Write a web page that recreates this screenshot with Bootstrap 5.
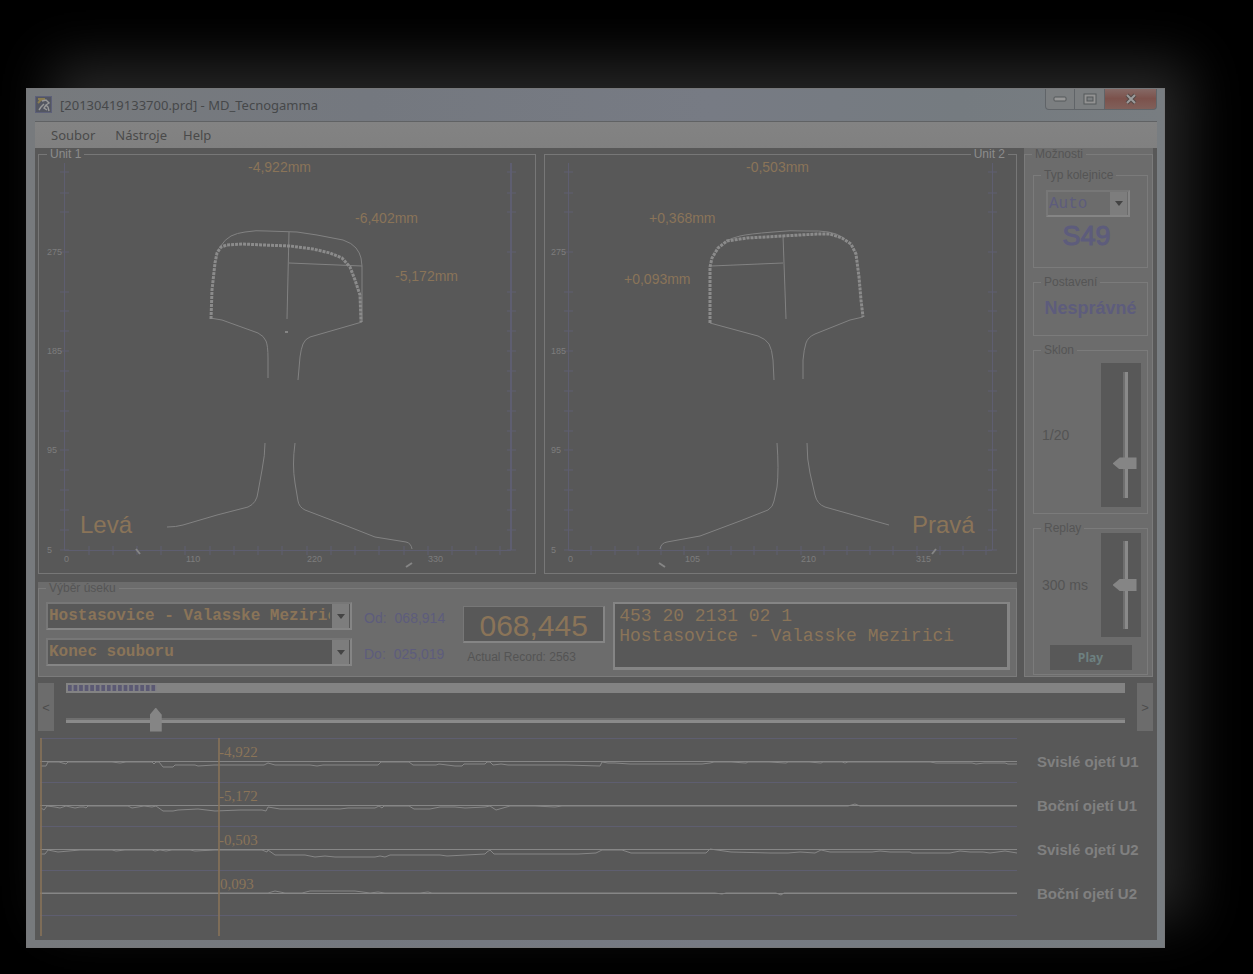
<!DOCTYPE html>
<html lang="cs">
<head>
<meta charset="utf-8">
<meta name="viewport" content="width=device-width, initial-scale=1">
<title>MD_Tecnogamma</title>
<link href="https://cdn.jsdelivr.net/npm/bootstrap@5.3.0/dist/css/bootstrap.min.css" rel="stylesheet">
<style>
:root{--face:#6c6c6c;--dark:#585858;--light:#858585;--line:#7b7b7b;--ink:#545454;--amber:#8a7458;--blue:#5d5c7c}
body{background:#000;padding:88px 88px 26px 26px;font:12px/13px "Liberation Sans",Arial,sans-serif;color:var(--ink)}
.app-window{background:linear-gradient(90deg,#777a7d,#74787f 30%,#777b84 60%,#757b80 82%,#787d81);padding:0 8px 8px 9px;box-shadow:25px -27px 50px #252525;outline:1px solid #77787a;outline-offset:-1px}
.title-bar{height:33px;font:13px/16px "Noto Sans",sans-serif;color:#46484a}
.win-btn{border:1px solid #606468;border-top:0;height:22px;width:30px;background:#7b7e80;padding:0}
.win-btn+.win-btn{border-left:0}
.win-btn.close-btn{width:52px;background:linear-gradient(#866c68,#7c524c 50%,#80605a);border-radius:0 0 4px 0}
.win-btn.min-btn{border-radius:0 0 0 4px}
.menu-bar{height:27px;background:linear-gradient(#838383,#808080);border-top:1px solid #606264;font:13px/16px "Noto Sans",sans-serif}
.menu-bar a{color:#4a4a4a;text-decoration:none}
.client{background:var(--dark);padding:0 4px 0 3px}
.with-side{display:grid;grid-template-columns:minmax(0,1fr) 129px;column-gap:7px}
.units{display:grid;grid-template-columns:498fr 473fr;column-gap:8px}
.gbox{border:1px solid var(--line);padding:0}
.gbox>legend{float:none;width:auto;margin:0 0 0 7px;padding:0 3px;font-size:12px;line-height:13px;height:13px;color:#555}
.unit-box{border-color:#777}
.unit-box>legend{color:#8c8c8c;margin-left:8px}
.unit-box>legend.at-right{margin:0 8px 0 auto}
svg{display:block;overflow:visible}
.panel{background:var(--face)}
.section-row{padding:7px 6px 6px 7px}
.section-combos{width:306px}
.value-md{font-size:14px;line-height:16px}
.blue{color:var(--blue)}
.combo{position:relative;border:2px solid var(--light);border-top-color:#777;border-left-color:#777;height:28px;background:var(--dark)}
.combo select{appearance:none;width:100%;height:100%;border:0;border-radius:0;background:transparent;color:var(--amber);font:bold 16px/20px "Liberation Mono",monospace;padding:0 20px 0 1px;display:block}
.combo .drop{position:absolute;right:1px;top:0;bottom:0;width:17px;background:#7d7d7d;pointer-events:none;display:flex;align-items:center;justify-content:center}
.combo.plain{background:var(--face);height:27px;width:84px;margin:8px 0 0 12px}
.combo.plain select{color:var(--blue);font-weight:normal}
.counter{width:142px;height:37px;border:2px solid var(--light);border-top:1px solid #777;border-left:1px solid #777;background:var(--dark);color:var(--amber);font-size:30px;line-height:38px;text-align:center}
.counter-col{margin-left:18px}
.record-text{height:68px;resize:none;background:var(--dark);border:3px solid var(--light);border-top-width:2px;border-left-width:2px;color:var(--amber);font:18px/20px "Liberation Mono",monospace;padding:2px 4px;overflow:hidden;display:block}
.slider{appearance:none;height:24px;background:transparent;margin:0;display:block;flex:none}
.slider::-webkit-slider-runnable-track{height:5px;background:linear-gradient(#6f6f6f 40%,#8a8a8a 40%)}
.slider::-webkit-slider-thumb{appearance:none;width:12px;height:24px;margin-top:-10px;background:#858585;clip-path:polygon(50% 0,100% 30%,100% 100%,0 100%,0 30%)}
.position-slider{margin-top:15px}
.slot-row{padding:6px 6px 0 8px}
.slot{width:40px;padding-left:8px;background:var(--dark);display:flex;align-items:center;justify-content:center;flex:none}
.slot .slider{transform:rotate(-90deg)}
.slot-tall{height:144px}.slot-tall .slider{width:126px}
.slot-short{height:104px}.slot-short .slider{width:88px}
.side-head{min-height:99px}.side-state{min-height:60px}.side-tilt{min-height:170px}.side-replay{min-height:153px}
.side-replay .slot-row{margin-top:-8px}
.rail-type{font-size:27px;line-height:30px;-webkit-text-stroke:1px var(--blue)}
.rail-state{font-size:18px;line-height:22px;font-weight:bold}
.play-btn{display:block;width:82px;height:25px;border:0;background:var(--dark);color:#6d8080;font:bold 12px/16px "Open Sans",sans-serif}
.step-row{padding-top:6px}
.step-btn{width:16px;height:48px;border:0;background:var(--face);color:#4c4c4c;font-size:13px;padding:0}
.progress.record-progress{height:10px;border-radius:0;background:#838383;padding:2px}
.record-progress .progress-bar{background:linear-gradient(90deg,#5b5973 65%,#808086 65%) 0 0/6.25% 100%}
.trace-names{font:bold 15px/16px "Liberation Sans",sans-serif;color:#808080;padding:4px 0 0 13px}
.trace-names div{height:44px;display:flex;align-items:center}
.curve{fill:none;stroke:#828282;stroke-width:1}
.traces .curve{stroke:#868686}
.scan{fill:none;stroke:#8b8b8b;stroke-width:3;stroke-dasharray:3 1}
.axis{fill:none;stroke:#5e5e70;stroke-width:1}
.axis-strong{stroke-width:2}
.axis-text{font-size:9px;fill:#7d7d7d}
.mm{font-size:14px;fill:var(--amber)}
.side-name{font-size:24px;fill:var(--amber)}
.trace-val{font:15px "Liberation Serif",serif;fill:var(--amber)}
</style>
</head>
<body>
<div class="app-window">
  <header class="title-bar d-flex justify-content-between">
    <div class="d-flex align-items-center gap-1">
      <svg class="me-1" width="17" height="17" viewBox="0 0 17 17" aria-hidden="true"><rect width="17" height="17" fill="#535661"/><rect x=".5" y=".5" width="16" height="16" fill="none" stroke="#5d6079"/><path d="M3 3h7M4 5l4-2M3 7l2-2" stroke="#8a7c50" stroke-width="2" fill="none"/><path d="M7 5l4-1 3 3-3 2 2 2 1 4M9 8l-3 3-2 3M11 9l-2 3 3 2" stroke="#989898" stroke-width="1.4" fill="none"/></svg>
      <span>[20130419133700.prd] - MD_Tecnogamma</span>
    </div>
    <div class="d-flex align-items-start">
      <button class="win-btn min-btn" aria-label="Minimalizovat"><svg class="mx-auto" width="14" height="8"><rect x="1" y="2" width="12" height="4" rx="1" fill="#969696" stroke="#55585a"/></svg></button>
      <button class="win-btn" aria-label="Maximalizovat"><svg class="mx-auto" width="14" height="12"><rect x="1" y="1" width="12" height="10" fill="#929292" stroke="#55585a"/><rect x="4" y="4" width="6" height="4" fill="#7b7e80" stroke="#55585a"/></svg></button>
      <button class="win-btn close-btn" aria-label="Zavřít"><svg class="mx-auto" width="12" height="10"><path d="M2 1l8 8M10 1l-8 8" stroke="#544a48" stroke-width="4"/><path d="M2 1l8 8M10 1l-8 8" stroke="#9b9b9b" stroke-width="2"/></svg></button>
    </div>
  </header>
  <nav class="menu-bar d-flex align-items-center px-3 gap-3">
    <a href="#" class="me-1">Soubor</a><a href="#">Nástroje</a><a href="#">Help</a>
  </nav>
  <main class="client">
    <div class="with-side">
      <div class="d-flex flex-column gap-2">
        <div class="units">
          <fieldset class="gbox unit-box">
            <legend>Unit 1</legend>
            <svg width="100%" viewBox="39 161 496 412" role="img" aria-label="Profil levé kolejnice">
              <defs><path id="vticks" d="M-4 172h9M-4 193h9M-4 212h9M-4 252h9M-4 292h9M-4 311h9M-4 331h9M-4 351h9M-4 371h9M-4 391h9M-4 411h9M-4 431h9M-4 450h9M-4 470h9M-4 490h9M-4 510h9M-4 530h9M-4 550h9"/></defs>
              <g class="axis"><path d="M64.500 163V550.500H511"/><path class="axis-strong" d="M511 163V550"/><use href="#vticks" x="64"/><use href="#vticks" x="511"/>
              <path d="M89 546v9M113 546v9M137 546v9M161 546v9M185 546v9M210 546v9M234 546v9M258 546v9M282 546v9M307 546v9M331 546v9M355 546v9M379 546v9M404 546v9M428 546v9M452 546v9M476 546v9M500 546v9"/></g>
              <g class="axis-text"><text x="47" y="255">275</text><text x="47" y="354">185</text><text x="47" y="453">95</text><text x="47" y="553">5</text><text x="64" y="562">0</text><text x="186" y="562">110</text><text x="307" y="562">220</text><text x="428" y="562">330</text></g>
              <path class="curve" d="M220 247Q225 239 231 236T245 232Q256 230 267 231L297 232 317 235 343 240Q352 243 356 248T361 258L362 266V322L310 337Q305 339 303 344T300 357L298 380M289 232L287 319M289 263L362 266M210 318L222 320 258 333Q264 336 266 341T268 358V378M265 443Q265 455 262 470L258 492Q257 503 248 507L217 515 183 525Q176 527 167 527M295 443Q292 465 295 483L298 501Q299 507 305 510L347 526 375 537 406 542Q411 543 412 549"/>
              <path class="scan" d="M211 319L212 290 215 263 217 253 221 247 227 245 243 244 263 245 290 246 313 249 330 253 342 258 350 267 355 280 360 295 361 322"/>
              <path d="M136 549L140 554M406 567L412 563M285 332h3" stroke="#858585" stroke-width="2"/>
              <g class="mm"><text x="248" y="172">-4,922mm</text><text x="355" y="223">-6,402mm</text><text x="395" y="281">-5,172mm</text></g>
              <text class="side-name" x="80" y="533">Levá</text>
            </svg>
          </fieldset>
          <fieldset class="gbox unit-box">
            <legend class="at-right">Unit 2</legend>
            <svg width="100%" viewBox="545 161 471 412" role="img" aria-label="Profil pravé kolejnice">
              <g class="axis"><path d="M568.500 163V550.500H992"/><path d="M992.500 163V550"/><use href="#vticks" x="568"/><use href="#vticks" x="992"/>
              <path d="M591 546v9M615 546v9M638 546v9M661 546v9M684 546v9M708 546v9M731 546v9M754 546v9M777 546v9M801 546v9M824 546v9M847 546v9M870 546v9M893 546v9M917 546v9M940 546v9M963 546v9M986 546v9"/></g>
              <g class="axis-text"><text x="551" y="255">275</text><text x="551" y="354">185</text><text x="551" y="453">95</text><text x="551" y="553">5</text><text x="568" y="562">0</text><text x="685" y="562">105</text><text x="801" y="562">210</text><text x="916" y="562">315</text></g>
              <path class="curve" d="M726 241Q732 238 740 236T773 232Q790 230 807 231 832 230 842 237M711 266L783 263M783 235L786 319M710 323L758 336Q766 339 769 344T773 360L774 380M863 317L850 320 815 334Q808 337 806 343T803 360V379M777 443Q779 470 777 487L774 501Q773 507 768 510L740 521 700 536 667 542Q661 543 660 549M807 443Q807 460 810 473L815 495Q817 504 825 507L889 525"/>
              <path class="scan" d="M710 323V267L712 258 718 248 727 241 747 238 783 236 817 234 830 234 842 238 851 244 856 254 859 277 861 300 863 317"/>
              <path d="M659 563L665 567M932 554L936 549" stroke="#858585" stroke-width="2"/>
              <g class="mm"><text x="746" y="172">-0,503mm</text><text x="649" y="223">+0,368mm</text><text x="624" y="284">+0,093mm</text></g>
              <text class="side-name" x="912" y="533">Pravá</text>
            </svg>
          </fieldset>
        </div>
        <section class="panel">
          <fieldset class="gbox">
            <legend>Výběr úseku</legend>
            <div class="d-flex section-row">
              <div class="d-flex flex-column gap-2 section-combos">
                <div class="combo"><select aria-label="Úsek"><option>Hostasovice - Valasske Mezirici</option></select><span class="drop"><svg width="8" height="5"><path d="M0 0h8L4 5z" fill="#444"/></svg></span></div>
                <div class="combo"><select aria-label="Konec"><option>Konec souboru</option></select><span class="drop"><svg width="8" height="5"><path d="M0 0h8L4 5z" fill="#444"/></svg></span></div>
              </div>
              <div class="value-md blue d-flex flex-column justify-content-between ps-2 ms-1 py-2">
                <div class="d-flex gap-2"><span>Od:</span><span>068,914</span></div>
                <div class="d-flex gap-2"><span>Do:</span><span>025,019</span></div>
              </div>
              <div class="counter-col pt-1"><div class="counter">068,445</div><div class="mt-2 ps-1">Actual Record: 2563</div></div>
              <textarea class="record-text flex-grow-1 ms-2" aria-label="Záznam" readonly>453 20 2131 02 1
Hostasovice - Valasske Mezirici</textarea>
            </div>
          </fieldset>
        </section>
      </div>
      <aside class="panel">
        <fieldset class="gbox h-100">
          <legend>Možnosti</legend>
          <div class="d-flex flex-column gap-2 ps-2 pe-1 pt-2">
            <fieldset class="gbox side-head"><legend>Typ kolejnice</legend>
              <div class="combo plain"><select aria-label="Typ kolejnice"><option>Auto</option></select><span class="drop"><svg width="8" height="5"><path d="M0 0h8L4 5z" fill="#444"/></svg></span></div>
              <div class="rail-type blue text-center pe-2 mt-1">S49</div>
            </fieldset>
            <fieldset class="gbox side-state"><legend>Postavení</legend><div class="rail-state blue text-center mt-2">Nesprávné</div></fieldset>
            <fieldset class="gbox side-tilt"><legend>Sklon</legend>
              <div class="d-flex justify-content-between align-items-center slot-row"><label for="tilt" class="value-md">1/20</label><div class="slot slot-tall"><input id="tilt" class="slider" type="range" value="25"></div></div>
            </fieldset>
            <fieldset class="gbox side-replay"><legend>Replay</legend>
              <div class="d-flex justify-content-between align-items-center slot-row"><label for="speed" class="value-md">300 ms</label><div class="slot slot-short"><input id="speed" class="slider" type="range" value="50"></div></div>
              <button class="play-btn mt-2 mx-auto">Play</button>
            </fieldset>
          </div>
        </fieldset>
      </aside>
    </div>
    <div class="d-flex justify-content-between step-row">
      <button class="step-btn" aria-label="Předchozí">&lt;</button>
      <div class="flex-grow-1 px-2 mx-1">
        <div class="progress record-progress"><div class="progress-bar" role="progressbar" aria-label="Průběh" style="width:8.4%"></div></div>
        <input class="slider position-slider w-100" type="range" step="0.1" value="8" aria-label="Pozice">
      </div>
      <button class="step-btn" aria-label="Další">&gt;</button>
    </div>
    <div class="with-side pt-1">
      <svg class="traces" width="100%" viewBox="38 736 979 204" role="img" aria-label="Průběh ojetí">
        <path class="axis" d="M40 738.500H1017M40 782.500H1017M40 826.500H1017M40 870.500H1017M40 915.500H1017"/>
        <path class="curve" d="M40 761.500H1017M40 805.500H1017M40 849.500H1017M40 893.500H1017"/>
        <g class="curve">
          <path d="M41 766H46L48 762 59 762 66 764 68 762H112L120 763 126 762H152L154 764 156 762H159L163 767H173L175 765 195 765 198 766 214 765H264L268 763 275 765H310L317 766 323 765H378L381 762H409L413 765H436L439 764 455 766H462L464 764H485L487 762 490 762 493 765 501 764 508 765H566L600 766 602 762 608 763 615 763 630 764H702L710 763 714 762H731L746 763 748 762H769L786 763 788 762H809L821 763 823 762H842L845 763 848 762H930L936 763H972L976 764 984 763H1005L1008 764H1017"/>
          <path d="M41 808L44 810 47 806 55 807 60 808 66 806 75 808 80 807 84 807 86 808 88 806H128L132 808 144 806 152 807 156 806 163 811H173L178 810 198 809 215 811 240 810 262 810 266 811 268 807 280 809H305L320 809 340 809 348 808H375L379 806 382 808 384 806H409L414 809H430L440 807H455L465 808 485 807 490 806 496 810 503 808 510 806H535L555 807 562 806H848L855 804 860 806H1017"/>
          <path d="M41 854L45 854 48 850 58 852 80 850H112L116 851 125 850H152L155 851 160 850 166 851 172 850H190L195 851 215 850H262L267 852 268 850 275 855H305L315 857 325 856 335 857H375L380 856 385 857 390 855H440L447 856 485 854 487 852 490 850 494 854H510L535 854H578L596 853 602 850H622L631 853H706L710 849 731 852 770 853H788L800 852 815 853 821 850 830 852H872L880 851 890 852 910 852 912 853H950L960 851 970 852H983L990 853 1005 851 1017 853"/>
          <path d="M40 893H268L275 891 285 893H302L310 891H355L370 893 378 892 385 893H420L428 892 432 893H715L722 894 726 893H776L781 895 784 893H1017"/>
        </g>
        <path d="M41 738V936M219 738V936" stroke="#8a7458" stroke-width="1.500"/>
        <g class="trace-val"><text x="219" y="757">-4,922</text><text x="219" y="801">-5,172</text><text x="219" y="845">-0,503</text><text x="220" y="889">0,093</text></g>
      </svg>
      <div class="trace-names"><div>Svislé ojetí U1</div><div>Boční ojetí U1</div><div>Svislé ojetí U2</div><div>Boční ojetí U2</div></div>
    </div>
  </main>
</div>
<script src="https://cdn.jsdelivr.net/npm/bootstrap@5.3.0/dist/js/bootstrap.bundle.min.js"></script>
</body>
</html>
